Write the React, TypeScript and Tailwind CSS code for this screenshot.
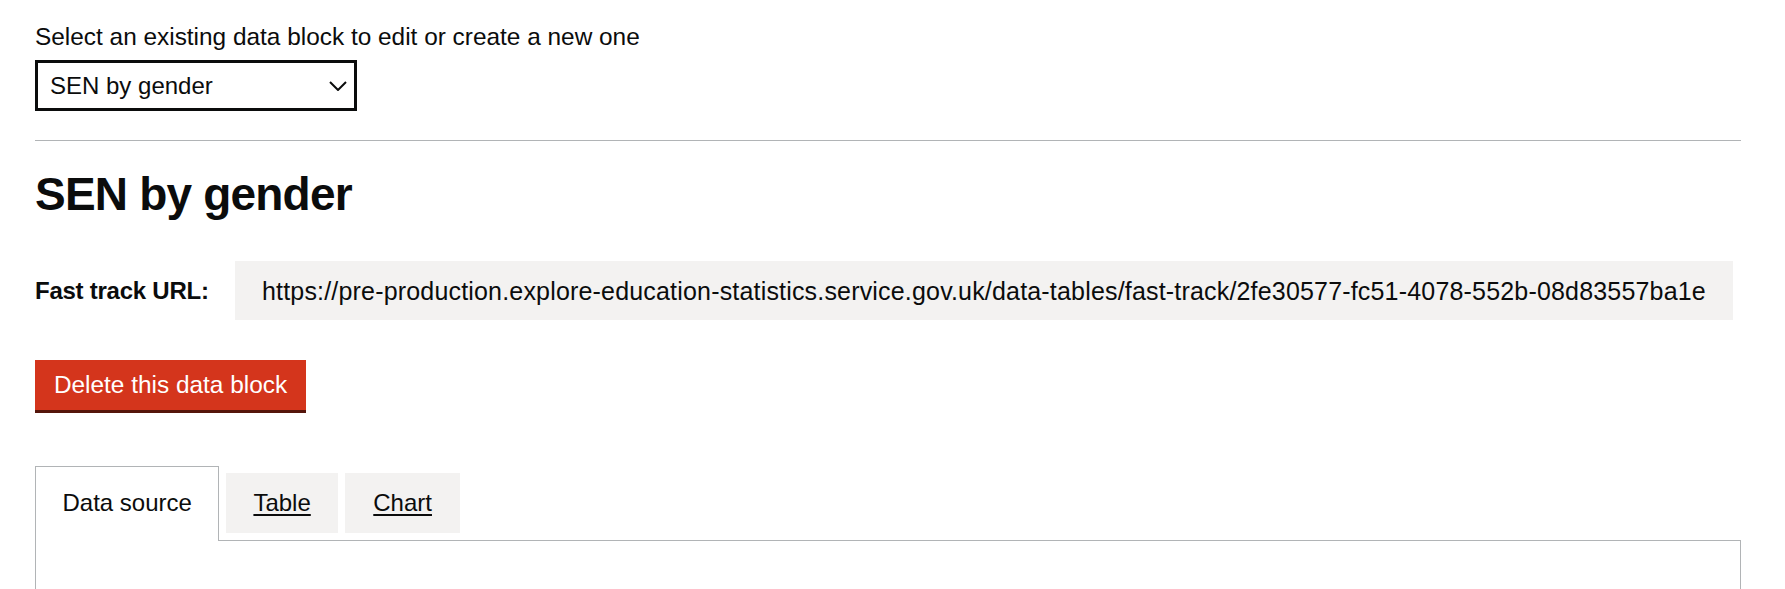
import React from "react";

export default function App() {
  return (
    <div className="h-[589px] overflow-hidden bg-white font-['Liberation_Sans',Arial,sans-serif] text-[#0b0c0c]">
      <div className="pl-[35px] pr-[44px] pt-[22px]">
        <label className="block text-[24.4px] leading-[30px]">
          Select an existing data block to edit or create a new one
        </label>
        <div className="mt-[8px] flex h-[51px] w-[322px] items-center justify-between border-[3px] border-[#0b0c0c] pl-[12px] pr-[7px] text-[24px] leading-[30px]">
          <span>SEN by gender</span>
          <svg width="18" height="10" viewBox="0 0 18 10" fill="none">
            <path d="M1 1 L9 9 L17 1" stroke="#0b0c0c" strokeWidth="2" />
          </svg>
        </div>
        <hr className="mt-[29px] border-0 border-t border-[#b1b4b6]" />
        <h1 className="mt-[29px] text-[46px] font-bold leading-[48px] tracking-[-0.8px]">
          SEN by gender
        </h1>
        <div className="mt-[43px] flex items-center">
          <div className="w-[200px] text-[24px] font-bold leading-[30px] tracking-[-0.25px]">
            Fast track URL:
          </div>
          <div className="flex h-[59px] w-[1498px] items-center bg-[#f3f2f1] pl-[27px] text-[25px] leading-[30px] tracking-[0.18px] whitespace-nowrap">
            https://pre-production.explore-education-statistics.service.gov.uk/data-tables/fast-track/2fe30577-fc51-4078-552b-08d83557ba1e
          </div>
        </div>
        <button className="mt-[40px] block h-[50px] w-[271px] bg-[#d4351c] text-center text-[24.4px] leading-[30px] text-white shadow-[0_3px_0_#55150b]">
          Delete this data block
        </button>
        <div className="mt-[56px]">
          <div className="flex items-end gap-[6.5px]">
            <div className="relative z-10 -mb-px h-[75px] border border-b-0 border-[#b1b4b6] bg-white px-[26.5px] pt-[21px] text-[24px] leading-[30px]">
              Data source
            </div>
            <div className="mb-[7px] h-[60px] bg-[#f3f2f1] px-[27.5px] py-[15px] text-[24px] leading-[30px] underline decoration-2 underline-offset-[3px]">
              Table
            </div>
            <div className="mb-[7px] h-[60px] bg-[#f3f2f1] px-[28.5px] py-[15px] text-[24px] leading-[30px] underline decoration-2 underline-offset-[3px]">
              Chart
            </div>
          </div>
          <div className="h-[200px] border border-[#b1b4b6]"></div>
        </div>
      </div>
    </div>
  );
}
